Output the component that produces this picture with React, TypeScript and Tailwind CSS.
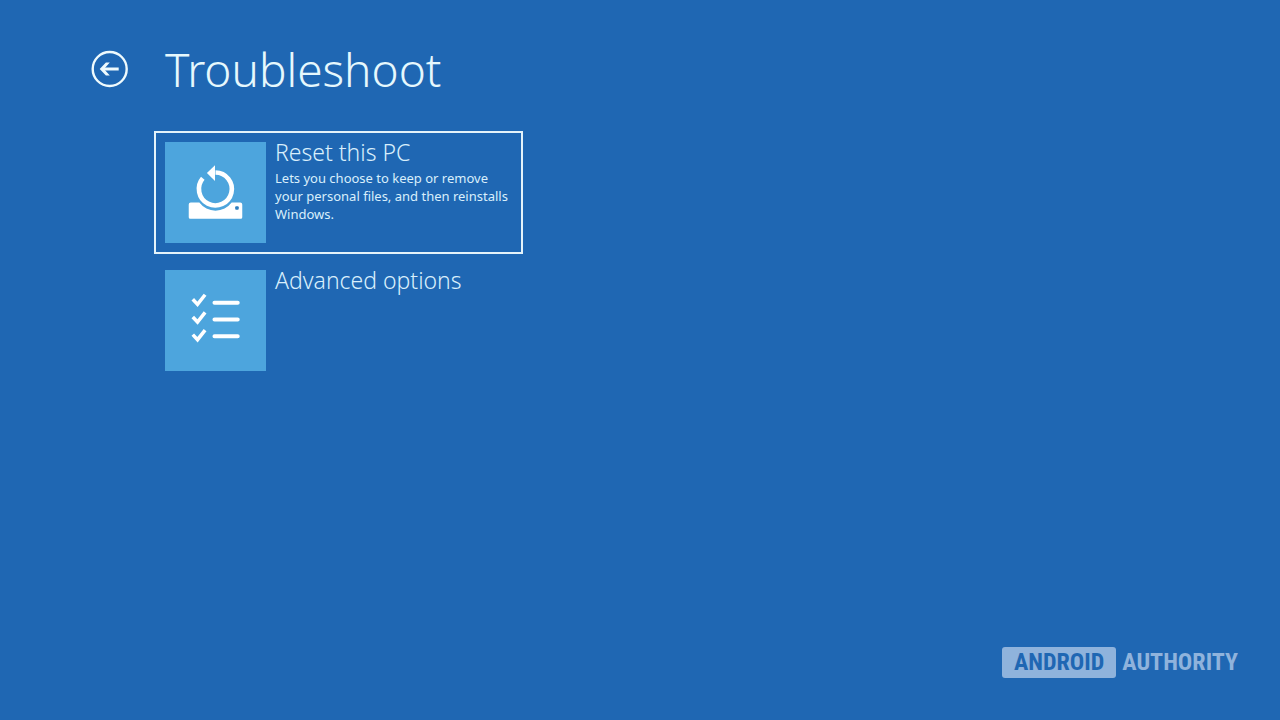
import type { ReactNode } from "react";

function BackIcon() {
  return (
    <svg viewBox="0 0 38 38" className="size-full" fill="none" stroke="currentColor" aria-hidden="true">
      <circle cx="18.700" cy="19" r="17" strokeWidth="2.400" />
      <path d="M27.700 19H12" strokeWidth="3" />
      <path d="M18.800 12.600h-3.900L8.700 19l6.200 6.400h3.900L13 19z" fill="currentColor" stroke="none" />
    </svg>
  );
}

function ResetIcon() {
  return (
    <svg viewBox="0 0 100 100" className="size-full" aria-hidden="true">
      <path
        d="M25.500 60H34a20 20 0 0 0 32 0h8.500a2 2 0 0 1 2 2v12.500a1.500 1.500 0 0 1-1.500 1.500H25a1.500 1.500 0 0 1-1.500-1.500V62a2 2 0 0 1 2-2z"
        fill="white"
      />
      <rect x="69.500" y="63.500" width="3.500" height="3.500" rx="1" fill="#2f7fc0" />
      <path d="M37.400 36A16.300 16.300 0 1 0 50 30.200" fill="none" stroke="white" strokeWidth="4.600" />
      <path d="M49.500 23v15.500L41.500 30.800z" fill="white" />
    </svg>
  );
}

function ChecklistIcon() {
  return (
    <svg viewBox="0 0 100 100" className="size-full" fill="none" stroke="white" aria-hidden="true">
      <g strokeWidth="3.500">
        <path d="M27.500 29l4.700 5L39.700 24.500" />
        <path d="M27.500 46.500l4.700 5L39.700 42" />
        <path d="M27.500 64l4.700 5L39.700 59.500" />
      </g>
      <g strokeWidth="4" strokeLinecap="round">
        <path d="M49 32.500H72M49 49H72M49 65.500H72" />
      </g>
    </svg>
  );
}

type OptionProps = {
  title: string;
  description?: string;
  icon: ReactNode;
  selected?: boolean;
};

function Option({ title, description, icon, selected = false }: OptionProps) {
  return (
    <button
      type="button"
      className={`flex w-full items-start gap-[9px] border-2 p-[9px] text-left ${
        selected ? "border-[#e4f3fa]" : "border-transparent"
      }`}
    >
      <span className="block size-[101px] shrink-0 bg-[#4da5dd]">{icon}</span>
      <span className="block min-w-0 flex-1">
        <span className="block text-[23px] leading-5 font-light text-[#d9effc]">{title}</span>
        {description && (
          <span className="mt-[7px] block text-[13px] leading-[18px] text-[#d9effc]">{description}</span>
        )}
      </span>
    </button>
  );
}

export default function App() {
  return (
    <div className="flex min-h-screen flex-col bg-[#1f67b3] font-['Noto_Sans','Open_Sans',sans-serif] text-white">
      <header className="flex items-center gap-9 px-[91px] pt-[39px]">
        <button type="button" aria-label="Back" className="size-[38px] shrink-0 text-[#eefafd]">
          <BackIcon />
        </button>
        <h1 className="text-[46px] leading-[60px] font-light text-[#e6f8fd]">Troubleshoot</h1>
      </header>
      <main className="flex flex-1 flex-col pt-8 pl-[154px]">
        <div className="flex w-full max-w-[369px] flex-col gap-[5px]">
          <Option
            selected
            title="Reset this PC"
            description="Lets you choose to keep or remove your personal files, and then reinstalls Windows."
            icon={<ResetIcon />}
          />
          <Option title="Advanced options" icon={<ChecklistIcon />} />
        </div>
      </main>
      <footer className="flex items-center justify-end gap-1.5 pr-[42px] pb-[42px] font-['Roboto_Condensed','Liberation_Sans_Narrow',sans-serif] text-2xl leading-[31px] font-bold text-[#8fb3dc]">
        <span className="rounded-[3px] bg-[#8fb3dc] px-3 text-[#1f67b3]">ANDROID</span>
        <span>AUTHORITY</span>
      </footer>
    </div>
  );
}
